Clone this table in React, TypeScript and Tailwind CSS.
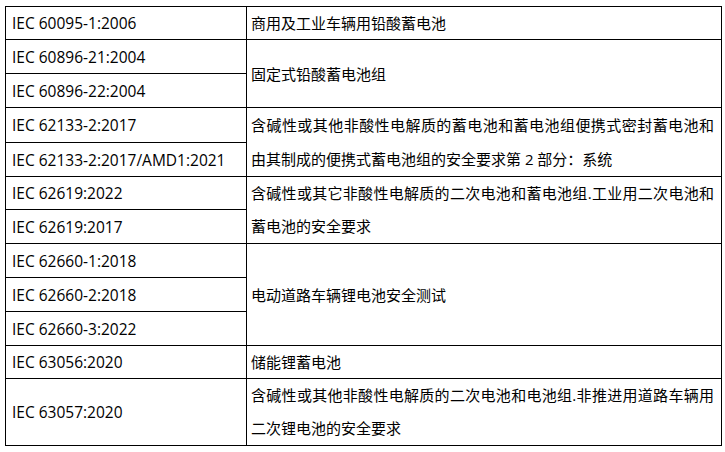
import React from "react";

const font = { fontFamily: '"Open Sans", "Noto Sans CJK SC", sans-serif' };

type Group = { codes: string[]; heights: string[]; desc: string; leading: string };

const groups: Group[] = [
  { codes: ["IEC 60095-1:2006"], heights: ["h-[33px]"], desc: "商用及工业车辆用铅酸蓄电池", leading: "leading-[20px]" },
  {
    codes: ["IEC 60896-21:2004", "IEC 60896-22:2004"],
    heights: ["h-[34px]", "h-[34px]"],
    desc: "固定式铅酸蓄电池组",
    leading: "leading-[20px]",
  },
  {
    codes: ["IEC 62133-2:2017", "IEC 62133-2:2017/AMD1:2021"],
    heights: ["h-[35px]", "h-[34px]"],
    desc: "含碱性或其他非酸性电解质的蓄电池和蓄电池组便携式密封蓄电池和由其制成的便携式蓄电池组的安全要求第 2 部分：系统",
    leading: "leading-[34px]",
  },
  {
    codes: ["IEC 62619:2022", "IEC 62619:2017"],
    heights: ["h-[33px]", "h-[34px]"],
    desc: "含碱性或其它非酸性电解质的二次电池和蓄电池组.工业用二次电池和蓄电池的安全要求",
    leading: "leading-[33px]",
  },
  {
    codes: ["IEC 62660-1:2018", "IEC 62660-2:2018", "IEC 62660-3:2022"],
    heights: ["h-[34px]", "h-[34px]", "h-[34px]"],
    desc: "电动道路车辆锂电池安全测试",
    leading: "leading-[20px]",
  },
  { codes: ["IEC 63056:2020"], heights: ["h-[33px]"], desc: "储能锂蓄电池", leading: "leading-[20px]" },
  {
    codes: ["IEC 63057:2020"],
    heights: ["h-[66px]"],
    desc: "含碱性或其他非酸性电解质的二次电池和电池组.非推进用道路车辆用二次锂电池的安全要求",
    leading: "leading-[33px]",
  },
];

export default function App() {
  return (
    <div className="w-[725px] h-[452px] bg-white pt-[6px] pl-[5px]" style={font}>
      <table className="border-collapse w-[716px] text-[15px] text-black table-fixed">
        <colgroup>
          <col className="w-[241px]" />
          <col className="w-[475px]" />
        </colgroup>
        <tbody>
          {groups.map((g, gi) =>
            g.codes.map((c, ci) => (
              <tr key={gi + "-" + ci} className={g.heights[ci]}>
                <td className="border border-black pl-[6px] py-0 text-[15.5px] leading-[20px] align-middle">{c}</td>
                {ci === 0 && (
                  <td
                    rowSpan={g.codes.length}
                    className={"border border-black pl-[4px] pr-[7px] py-0 align-middle text-justify " + g.leading}
                  >
                    {g.desc}
                  </td>
                )}
              </tr>
            ))
          )}
        </tbody>
      </table>
    </div>
  );
}
